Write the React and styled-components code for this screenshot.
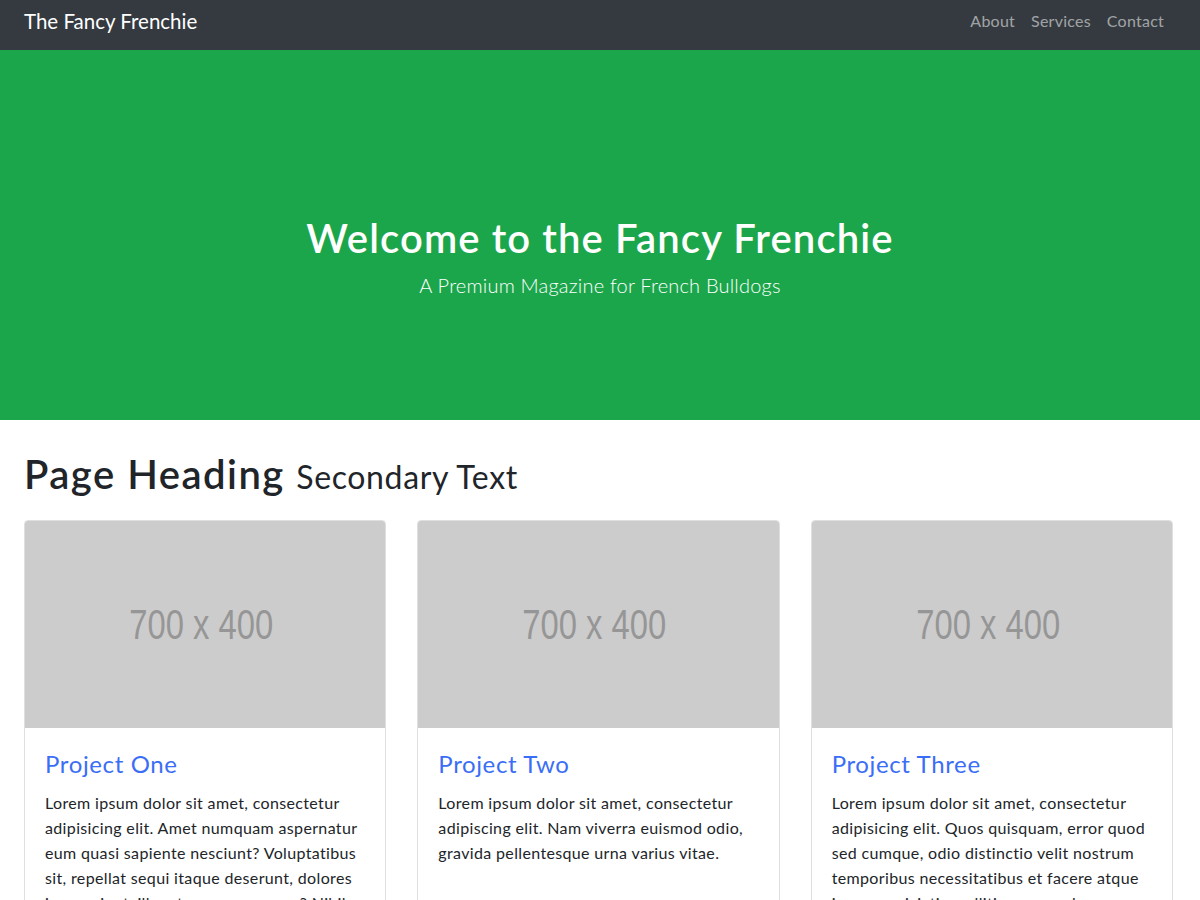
import React from "react";
import styled, { createGlobalStyle } from "styled-components";

const Global = createGlobalStyle`
  html, body { margin: 0; padding: 0; }
  body {
    font-family: Lato, "Open Sans", "Liberation Sans", sans-serif;
    color: #212529;
    background: #fff;
    font-size: 16px;
    overflow: hidden;
  }
  * { box-sizing: border-box; }
`;

const Navbar = styled.nav`
  height: 50px;
  background: #343a40;
  display: flex;
  align-items: center;
  justify-content: space-between;
  padding: 0 36px 0 24px;
`;

const Brand = styled.a`
  color: #fff;
  font-size: 20.5px;
  text-decoration: none;
  margin-top: -8px;
`;

const NavLinks = styled.div`
  display: flex;
  gap: 16px;
  margin-top: -9px;
`;

const NavLink = styled.a`
  color: rgba(255, 255, 255, 0.55);
  font-size: 16px;
  letter-spacing: 0.015em;
  text-decoration: none;
`;

const Hero = styled.header`
  height: 370px;
  background: #1ca64b;
  color: #fff;
  display: flex;
  flex-direction: column;
  align-items: center;
  justify-content: center;
  padding-top: 40px;
`;

const HeroTitle = styled.h1`
  margin: 0;
  font-size: 40px;
  font-weight: 600;
  line-height: 1.2;
  letter-spacing: 0.028em;
`;

const HeroLead = styled.p`
  margin: 11px 0 0;
  font-size: 20px;
  font-weight: 300;
  letter-spacing: 0.01em;
`;

const Container = styled.main`
  padding: 0 27px 0 24px;
`;

const PageHeading = styled.h1`
  margin: 30px 0 22px;
  font-size: 40px;
  font-weight: 600;
  line-height: 1.2;
  letter-spacing: 0.037em;
`;

const Small = styled.small`
  font-size: 32px;
  font-weight: 400;
  letter-spacing: 0.02em;
`;

const Grid = styled.div`
  display: grid;
  grid-template-columns: repeat(3, 1fr);
  column-gap: 31px;
`;

const Card = styled.div`
  border: 1px solid rgba(0, 0, 0, 0.125);
  border-radius: 4px;
  overflow: hidden;
  height: 420px;
`;

const Placeholder = styled.div`
  height: 207px;
  background: #cccccc;
  display: flex;
  align-items: center;
  justify-content: center;
`;

const PlaceholderLabel = styled.span`
  color: #969696;
  font-family: "Liberation Sans", Arial, sans-serif;
  font-size: 42px;
  transform: translateX(-4px) scaleX(0.78);
  white-space: nowrap;
`;

const CardBody = styled.div`
  padding: 22px 20px 20px;
`;

const CardTitle = styled.h4`
  margin: 0 0 11px;
  font-size: 24px;
  font-weight: 400;
  line-height: 1.2;
  letter-spacing: 0.026em;
  color: #3b6ef6;
`;

const CardText = styled.p`
  margin: 0;
  font-size: 16px;
  line-height: 25px;
  letter-spacing: 0.022em;
  color: #212529;
`;

const projects = [
  {
    title: "Project One",
    text:
      "Lorem ipsum dolor sit amet, consectetur adipisicing elit. Amet numquam aspernatur eum quasi sapiente nesciunt? Voluptatibus sit, repellat sequi itaque deserunt, dolores in, nesciunt, illum tempora ex quae? Nihil, dolorem!",
  },
  {
    title: "Project Two",
    text:
      "Lorem ipsum dolor sit amet, consectetur adipiscing elit. Nam viverra euismod odio, gravida pellentesque urna varius vitae.",
  },
  {
    title: "Project Three",
    text:
      "Lorem ipsum dolor sit amet, consectetur adipisicing elit. Quos quisquam, error quod sed cumque, odio distinctio velit nostrum temporibus necessitatibus et facere atque iure perspiciatis mollitia recusandae vero vel quam!",
  },
];

export default function App() {
  return (
    <>
      <Global />
      <Navbar>
        <Brand href="#">The Fancy Frenchie</Brand>
        <NavLinks>
          <NavLink href="#">About</NavLink>
          <NavLink href="#">Services</NavLink>
          <NavLink href="#">Contact</NavLink>
        </NavLinks>
      </Navbar>
      <Hero>
        <HeroTitle>Welcome to the Fancy Frenchie</HeroTitle>
        <HeroLead>A Premium Magazine for French Bulldogs</HeroLead>
      </Hero>
      <Container>
        <PageHeading>
          Page Heading <Small>Secondary Text</Small>
        </PageHeading>
        <Grid>
          {projects.map((p) => (
            <Card key={p.title}>
              <Placeholder>
                <PlaceholderLabel>700 x 400</PlaceholderLabel>
              </Placeholder>
              <CardBody>
                <CardTitle>{p.title}</CardTitle>
                <CardText>{p.text}</CardText>
              </CardBody>
            </Card>
          ))}
        </Grid>
      </Container>
    </>
  );
}
